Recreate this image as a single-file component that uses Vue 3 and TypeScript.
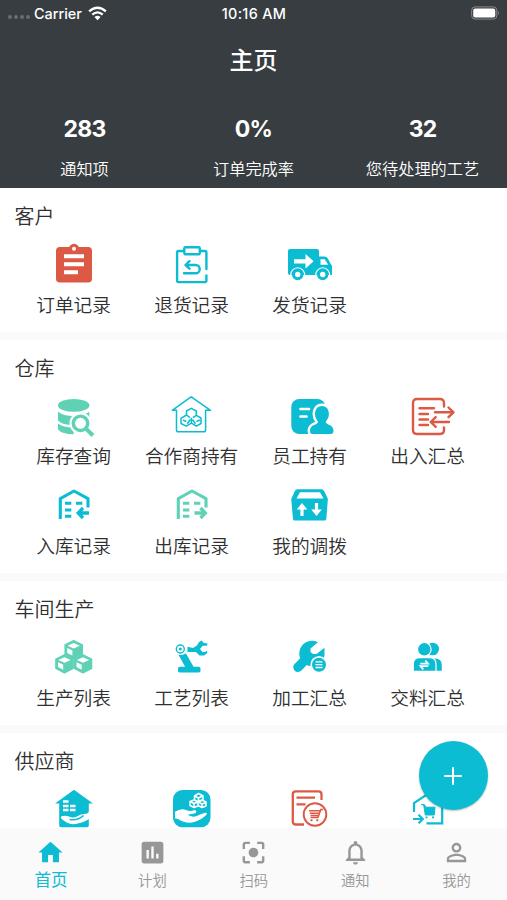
<script setup lang="ts">
interface Entry {
  label: string
  icon: string
  tone: 'cyan' | 'red' | 'green'
}
interface Section {
  title: string
  entries: Entry[]
}

const stats = [
  { value: '283', label: '通知项' },
  { value: '0%', label: '订单完成率' },
  { value: '32', label: '您待处理的工艺' },
]

const sections: Section[] = [
  {
    title: '客户',
    entries: [
      { label: '订单记录', icon: 'order', tone: 'red' },
      { label: '退货记录', icon: 'return', tone: 'cyan' },
      { label: '发货记录', icon: 'truck', tone: 'cyan' },
    ],
  },
  {
    title: '仓库',
    entries: [
      { label: '库存查询', icon: 'stock', tone: 'green' },
      { label: '合作商持有', icon: 'partner', tone: 'cyan' },
      { label: '员工持有', icon: 'staff', tone: 'cyan' },
      { label: '出入汇总', icon: 'flow', tone: 'red' },
      { label: '入库记录', icon: 'inbound', tone: 'cyan' },
      { label: '出库记录', icon: 'outbound', tone: 'green' },
      { label: '我的调拨', icon: 'transfer', tone: 'cyan' },
    ],
  },
  {
    title: '车间生产',
    entries: [
      { label: '生产列表', icon: 'cubes', tone: 'green' },
      { label: '工艺列表', icon: 'robot', tone: 'cyan' },
      { label: '加工汇总', icon: 'wrench', tone: 'cyan' },
      { label: '交料汇总', icon: 'people', tone: 'cyan' },
    ],
  },
  {
    title: '供应商',
    entries: [
      { label: '', icon: 'house-hand', tone: 'cyan' },
      { label: '', icon: 'cube-hand', tone: 'cyan' },
      { label: '', icon: 'doc-cart', tone: 'red' },
      { label: '', icon: 'house-cart', tone: 'cyan' },
    ],
  },
]

const tabs = [
  { label: '首页', icon: 'home', active: true },
  { label: '计划', icon: 'chart', active: false },
  { label: '扫码', icon: 'scan', active: false },
  { label: '通知', icon: 'bell', active: false },
  { label: '我的', icon: 'person', active: false },
]
</script>

<template>
  <div class="screen">
    <svg class="sprite" aria-hidden="true">
      <defs>
        <g id="i-order">
          <circle cx="20" cy="5.2" r="5.4" fill="currentColor" />
          <rect x="2" y="3" width="36" height="35.5" rx="3.8" fill="currentColor" />
          <circle cx="20" cy="4.7" r="2" fill="#fff" />
          <path d="M10 12.3h20M10 20.3h20M10 28.3h14" stroke="#fff" stroke-width="4" fill="none" />
        </g>
        <g id="i-return" fill="none" stroke="currentColor" stroke-width="2.4" stroke-linecap="round" stroke-linejoin="round">
          <path d="M11.500 7H6.500q-1.400 0-1.400 1.400V36.500q0 1.600 1.400 1.600H33q1.400 0 1.400-1.600V31.500M34.400 25V8.400q0-1.400-1.400-1.400H28.200" />
          <rect x="12.300" y="3.300" width="15.500" height="7" rx="1.200" />
          <path d="M17.500 17.200 13.500 21 17.500 24.700M13.500 21H23.600a4.100 4.100 0 0 1 0 8.300H12" />
        </g>
        <g id="i-truck">
          <path d="M0 5H27q2 0 2 2V12.500H34.500q2 0 3 1.500L41 20.500q1 .5 1 2V31H0q-2 0-2-2V7q0-2 2-2Z" fill="currentColor" />
          <path d="M30.500 15.300h4.200l3.500 5.400h-7.700Z" fill="#fff" />
          <path d="M4 15.200H15.500V10L23.600 17.300 15.500 24.600V19.500H4Z" fill="#fff" />
          <g fill="#fff" stroke="currentColor" stroke-width="3"><circle cx="7.700" cy="30.500" r="4.200" /><circle cx="32.700" cy="30.500" r="4.200" /></g>
          <path d="M.8 32a7 7 0 1 1 13.800 0M25.800 32a7 7 0 1 1 13.800 0" stroke="#fff" stroke-width="1.100" fill="none" />
        </g>
        <g id="i-stock">
          <ellipse cx="19.700" cy="9.400" rx="15.700" ry="6.400" fill="currentColor" />
          <path d="M4 15.500q5 4.500 15.700 4.500V29Q8 29 4 24.500ZM4 27.500q5 4 15.700 4V38.300Q8 38.300 4 33.500Z" fill="currentColor" />
          <path d="M19 20.300q10 0 16.300-4.500V24H19Z" fill="currentColor" />
          <circle cx="26.500" cy="27.300" r="11" fill="#fff" />
          <circle cx="26.500" cy="27.300" r="7.200" fill="none" stroke="currentColor" stroke-width="3.400" />
          <path d="M31.500 32.300 39 39.500" stroke="currentColor" stroke-width="4" />
        </g>
        <g id="i-partner" fill="none" stroke="currentColor" stroke-width="1.500" stroke-linejoin="round">
          <path d="M19.300 .9 38.500 14.300H33.600V34q0 1.800-1.800 1.800H6.300q-1.800 0-1.800-1.800V14.300H.3L17.600 1.900q1.700-1.500 3.400 0" />
          <path d="M14.500 19V15L19.300 12.300 24.300 15V19.300L29 22V27.500L24.400 30.200 19.400 27.200 14.300 30.200 9 27.500V22.300L14.500 19l3.500 2.700M24.300 19.300l-3.500 2.400M19.400 21.800v5.200M11 24l3.300 1.500M28 24l-3.500 1.500M18.300 23.500l-3 4.300M20.500 23.500l3 4.300" />
        </g>
        <g id="i-staff">
          <rect x="1.300" y="3" width="34" height="35" rx="8" fill="currentColor" />
          <path d="M10.500 13H19M10.500 20.500h6" stroke="#fff" stroke-width="2.700" stroke-linecap="round" />
          <path d="M32 10c-4.500 0-7 3.600-7 8 0 3.500 1.500 5.600 3 7.500 0 4-8 2.500-8 9 0 3 1.500 3.500 3 3.500H40.500c2.500 0 3-1.600 3-3.500 0-6.500-7.800-5-7.800-9 1.800-1.900 3.200-4 3.200-7.500 0-4.400-2.400-8-6.900-8Z" fill="currentColor" stroke="#fff" stroke-width="5" paint-order="stroke" />
        </g>
        <g id="i-flow" fill="none" stroke="currentColor" stroke-width="2.400" stroke-linecap="round" stroke-linejoin="round">
          <path d="M36 10.500V7q0-4-4-4H9Q5 3 5 7V34q0 4 4 4H32q4 0 4-4V31.500" />
          <path d="M11.500 12.300H26M11.500 18H20M11.500 23.500H20M11.500 29H20M27 16.300H45.500M40.500 11.500l5 4.800-5 4.800M41 26H22.700M27.700 21.200l-5 4.800 5 4.800" />
        </g>
        <g id="i-depot" fill="none" stroke="currentColor" stroke-width="3.100" stroke-linejoin="round">
          <path d="M6.300 34V13.600L20 6 34 13.600V22.500" />
          <path d="M11 18.200h6.300M22 18.200h6.300M11 25h6.300M11 31.200h6.300" />
        </g>
        <g id="i-inbound">
          <use href="#i-depot" />
          <path d="M35 28H24.500M29 23 24.200 28l4.800 5" fill="none" stroke="currentColor" stroke-width="3.300" />
        </g>
        <g id="i-outbound">
          <use href="#i-depot" />
          <path d="M22.500 28H33M28.500 23 33.300 28l-4.800 5" fill="none" stroke="currentColor" stroke-width="3.300" />
        </g>
        <g id="i-transfer">
          <path d="M7.500 4.300H31.500q1.800 0 2.500 1.500L37.500 13q.5 1 .3 2L36.300 34q-.2 1.500-1.700 1.500H4.700Q3.200 35.500 3 34L1.300 15q-.1-1 .3-2L5 5.800Q5.700 4.300 7.500 4.300Z" fill="currentColor" />
          <path d="M10 7.200H30l3.500 6.300H6.500Z" fill="#fff" />
          <path d="M12 18 17.300 24.500H13.600V31H10.400V24.500H6.700ZM26.500 31 21.200 24.500h3.700V18h3.200v6.500h3.700Z" fill="#fff" />
        </g>
        <g id="i-cube">
          <path d="M0-8.600 8.600-4.300V5L0 9.400-8.600 5V-4.300Z" fill="currentColor" stroke="currentColor" stroke-width="1.400" stroke-linejoin="round" />
          <path d="M0-6.300 6.200-3.600 0-.8-6.200-3.600Z" fill="#fff" />
          <path d="M-6.500-1.200-1.300 1.300V6.200L-6.500 3.600Z" fill="#fff" />
        </g>
        <g id="i-cubes">
          <use href="#i-cube" x="19.700" y="12.300" />
          <use href="#i-cube" x="10.500" y="26.500" />
          <use href="#i-cube" x="29" y="26.500" />
        </g>
        <g id="i-robot" fill="currentColor">
          <circle cx="8.300" cy="12" r="4" fill="none" stroke="currentColor" stroke-width="1.400" />
          <circle cx="8.300" cy="12" r="1.500" />
          <path d="M15.500 9.800 21 11 25 8.500 27 5l2.500-1.500L32 6l3.500.5-.5 2.300-4.300 0L28 12l2.500 3H33l2-1.200.3 2.200L32 18.500h-4.500L24 15H15.500Z" />
          <path d="M6.500 17.700q4.500 1 7.300-1.500L22 30.500H13.500Z" />
          <rect x="6" y="29.800" width="22.500" height="5.700" rx="1.700" />
        </g>
        <g id="i-wrench">
          <path d="M8 30.300 18 20" stroke="currentColor" stroke-width="9.500" stroke-linecap="round" />
          <path d="M28 5.300A12.700 12.700 0 1 0 34.500 18.500V10.700L26.500 17 23 17 20.500 15V11.500Z" fill="currentColor" />
          <circle cx="29" cy="27.700" r="8.600" fill="#fff" />
          <circle cx="29" cy="27.700" r="7" fill="currentColor" />
          <path d="M25.500 24.900h7M25.500 27.700h7M25.500 30.500h7" stroke="#fff" stroke-width="1.300" />
        </g>
        <g id="i-people" fill="currentColor">
          <circle cx="24.700" cy="12" r="6.300" />
          <path d="M24 21.500h3q6.800 0 6.800 6.500v5.700H24Z" />
          <circle cx="16.300" cy="12.300" r="6.800" stroke="#fff" stroke-width="1.200" />
          <path d="M11.500 20.700H21.500q6.500 0 6.500 6.500V34.300H5.300V27.200q0-6.500 6.200-6.500Z" stroke="#fff" stroke-width="1.200" />
          <path d="M12.300 26.600h7.700L17.300 23.500M20.300 29.200H12.600l2.700 3.100" fill="none" stroke="#fff" stroke-width="1.800" />
        </g>
        <g id="i-hand">
          <path d="M0 2.500Q6-1.500 11 .8 15 2.500 19.500 .8 22.500 1.500 20.500 4L12.500 5.500Q18 9 24 5.800L30 3.500Q33 3 31 6 24.500 12 17 13.300 9 14 3.500 10L0 9Z" fill="#fff" />
        </g>
        <g id="i-house-hand">
          <path d="M20 .8 39 14.500H34.800V36.500q0 1.800-1.800 1.800H7q-1.800 0-1.800-1.800V14.500H1Z" fill="currentColor" />
          <path d="M9 12.500h5.500M9 17h5.500M16 17h5.500M9 21h5.500M16 21h5.500" stroke="#fff" stroke-width="2.500" />
          <path d="M7 27.500q4-1.500 8 0 4 2 8 0 3-2.500 7-2.500 3 .3 5-2V30q-7 4.500-15 5.200-7 0-13-6Z" fill="#fff" />
          <path d="M15.500 30.500q8 1.500 14-4" fill="none" stroke="currentColor" stroke-width="1.500" />
        </g>
        <g id="i-cube-hand">
          <rect x="1" y="1" width="37.500" height="37.300" rx="9.500" fill="currentColor" />
          <g fill="currentColor" stroke="#fff" stroke-width="1.500" stroke-linejoin="round">
            <path d="M26.500 4.500 31 7v4l-4.500 2-4-2V7ZM22 11l4 2v4l-4 1.500-4-2v-4ZM30 11l4 2v4l-4 1.500-4-2v-4ZM26.500 9v4M22 14.500v4M30 14.500v4M22.500 7l4 2 4-2M18.500 12.500l3.500 2 4-1.500 4 2 4-1.500" />
          </g>
          <use href="#i-hand" x="3" y="20.300" />
        </g>
        <g id="i-doc-cart" fill="none" stroke="currentColor" stroke-width="2.300">
          <path d="M31.500 11V5.300q0-3-3-3H5.800q-3 0-3 3V32.500q0 3 3 3H14M6.500 8.700H25M6.500 15.300h9" />
          <circle cx="25" cy="25.500" r="11.300" stroke-width="1.900" />
          <path d="M33 20.500H30.800L28 28.500H20.500M19 21.800H30M19.800 24.200h9.300M20.500 26.500h7.700" stroke-width="1.500" />
          <path d="M20.500 31.300h2M26.300 31.300h2" stroke-width="2" />
        </g>
        <g id="i-house-cart" fill="none" stroke="currentColor" stroke-width="2.200">
          <path d="M6 23V14.200L20.300 4.500 34.200 14.200V34.300H18.500M5 30H14.500M10.500 25.800 14.800 30l-4.300 4.300" />
          <path d="M13.300 15.500h3l1.500 2.700H27L26.300 26H17.300L15.700 16Z" fill="currentColor" stroke-width="1" />
          <path d="M17.500 28.300h2M24 28.300h2" stroke-width="1.700" />
        </g>

        <g id="i-home" fill="currentColor"><path d="M10 20v-6h4v6h5v-8h3L12 3 2 12h3v8z" /></g>
        <g id="i-chart" fill="currentColor"><path d="M19 3H5c-1.100 0-2 .9-2 2v14c0 1.100.9 2 2 2h14c1.100 0 2-.9 2-2V5c0-1.100-.9-2-2-2zM9 17H7v-7h2v7zm4 0h-2V7h2v10zm4 0h-2v-4h2v4z" /></g>
        <g id="i-scan" fill="currentColor"><path d="M5 15H3v4c0 1.100.9 2 2 2h4v-2H5v-4zM5 5h4V3H5c-1.100 0-2 .9-2 2v4h2V5zm14-2h-4v2h4v4h2V5c0-1.100-.9-2-2-2zm0 16h-4v2h4c1.100 0 2-.9 2-2v-4h-2v4zM12 8c-2.210 0-4 1.790-4 4s1.790 4 4 4 4-1.790 4-4-1.790-4-4-4z" /></g>
        <g id="i-bell" fill="currentColor"><path d="M12 22c1.100 0 2-.9 2-2h-4c0 1.100.9 2 2 2zm6-6v-5c0-3.070-1.630-5.640-4.500-6.320V4c0-.83-.67-1.500-1.500-1.500s-1.500.67-1.500 1.500v.68C7.640 5.360 6 7.920 6 11v5l-2 2v1h16v-1l-2-2zm-2 1H8v-6c0-2.480 1.510-4.500 4-4.500s4 2.020 4 4.500v6z" /></g>
        <g id="i-person" fill="currentColor"><path d="M12 5.900c1.160 0 2.100.94 2.100 2.100s-.94 2.100-2.100 2.100S9.900 9.160 9.900 8s.94-2.100 2.100-2.100m0 9c2.970 0 6.100 1.460 6.100 2.100v1.100H5.900V17c0-.64 3.130-2.100 6.100-2.100M12 4C9.790 4 8 5.790 8 8s1.790 4 4 4 4-1.790 4-4-1.790-4-4-4zm0 9c-2.670 0-8 1.340-8 4v3h16v-3c0-2.660-5.330-4-8-4z" /></g>
      </defs>
    </svg>

    <header class="header">
      <div class="status">
        <div class="carrier">
          <span class="signal"><i v-for="n in 4" :key="n" /></span>
          <span>Carrier</span>
          <svg class="wifi" viewBox="0 0 20 15" fill="#fff">
            <path d="M10 14.500 6.800 11.200Q10 8.500 13.200 11.200Z" />
            <path d="M4.500 8.600Q10 4 15.500 8.600M1.200 5.200Q10-2.300 18.800 5.200" fill="none" stroke="#fff" stroke-width="2.500" />
          </svg>
        </div>
        <span class="time">10:16 AM</span>
        <div class="power">
          <svg class="battery" viewBox="0 0 30 14">
            <rect x=".7" y=".7" width="26" height="12.600" rx="3.500" fill="none" stroke="#8b8e91" />
            <rect x="2.300" y="2.300" width="22.800" height="9.400" rx="2" fill="#fff" />
            <path d="M28 4.800q1.800 2.200 0 4.400Z" fill="#8b8e91" />
          </svg>
        </div>
      </div>
      <h1 class="heading">主页</h1>
      <div class="stats">
        <div v-for="s in stats" :key="s.label" class="stat">
          <strong>{{ s.value }}</strong>
          <span>{{ s.label }}</span>
        </div>
      </div>
    </header>

    <main class="content">
      <section v-for="section in sections" :key="section.title" class="section">
        <h2>{{ section.title }}</h2>
        <div class="grid">
          <div v-for="entry in section.entries" :key="entry.icon" class="entry">
            <svg class="glyph" :class="entry.tone" viewBox="0 0 40 40"><use :href="'#i-' + entry.icon" /></svg>
            <span>{{ entry.label }}</span>
          </div>
        </div>
      </section>
    </main>

    <nav class="tabs">
      <div v-for="tab in tabs" :key="tab.icon" class="tab" :class="{ active: tab.active }">
        <svg viewBox="0 0 24 24"><use :href="'#i-' + tab.icon" /></svg>
        <span>{{ tab.label }}</span>
      </div>
    </nav>

    <button class="fab" aria-label="新增">
      <svg viewBox="0 0 20 20"><path d="M10 1.300v17.400M1.300 10h17.400" stroke="#fff" stroke-width="2" /></svg>
    </button>
  </div>
</template>

<style>
body {
  margin: 0;
  overflow: hidden;
}
</style>

<style scoped>
.screen {
  position: relative;
  display: flex;
  flex-direction: column;
  height: 900px;
  overflow: hidden;
  background: #fafafa;
  color: #303030;
  font-family: Inter, 'Noto Sans CJK SC', sans-serif;
}
.sprite {
  position: absolute;
  width: 0;
  height: 0;
}
.header {
  flex: none;
  height: 188px;
  box-sizing: border-box;
  background: #383d41;
  color: #fff;
}
.status {
  display: grid;
  grid-template-columns: 1fr auto 1fr;
  align-items: center;
  height: 26px;
  padding: 0 7px 0 8px;
  font-size: 14.4px;
  font-weight: 450;
}
.time {
  letter-spacing: 0.35px;
}
.carrier {
  display: flex;
  align-items: center;
}
.signal {
  display: flex;
  gap: 2px;
  margin: 8px 4px 0 0;
}
.signal i {
  width: 4px;
  height: 4px;
  border-radius: 50%;
  background: #686d70;
}
.wifi {
  width: 19px;
  height: 15px;
  margin-left: 6px;
}
.power {
  display: flex;
  justify-content: flex-end;
}
.battery {
  width: 29px;
  height: 14px;
}
.heading {
  margin: 0;
  height: 68px;
  line-height: 69px;
  text-align: center;
  font-size: 24px;
  font-weight: 500;
}
.stats {
  display: grid;
  grid-template-columns: repeat(3, 1fr);
  padding-top: 20px;
}
.stat {
  display: flex;
  flex-direction: column;
  align-items: center;
}
.stat strong {
  height: 30px;
  line-height: 31px;
  font-size: 23px;
  font-weight: 700;
  letter-spacing: -0.8px;
}
.stat span {
  margin-top: 12px;
  line-height: 26px;
  font-size: 16.2px;
  font-weight: 350;
}
.content {
  flex: 1;
  min-height: 0;
  overflow: hidden;
  display: flex;
  flex-direction: column;
  gap: 8.1px;
}
.section {
  flex: none;
  background: #fff;
}
h2 {
  margin: 0;
  height: 54px;
  padding-left: 14.5px;
  line-height: 58.6px;
  font-size: 20px;
  font-weight: 350;
}
.grid {
  display: grid;
  grid-template-columns: repeat(4, 118px);
  grid-auto-rows: 89.7px;
  padding-left: 14.6px;
}
.entry {
  display: flex;
  flex-direction: column;
  align-items: center;
  padding-top: 2px;
}
.glyph {
  flex: none;
  width: 40px;
  height: 40px;
  overflow: visible;
}
.cyan {
  color: #0bbcd3;
}
.red {
  color: #dc5a45;
}
.green {
  color: #5fd2b6;
}
.entry span {
  margin-top: 9.5px;
  line-height: 24px;
  font-size: 18.7px;
  font-weight: 350;
  white-space: nowrap;
}
.tabs {
  flex: none;
  display: grid;
  grid-template-columns: repeat(5, 1fr);
  height: 72px;
  background: #fafafa;
}
.tab {
  display: flex;
  flex-direction: column;
  align-items: center;
  padding: 10px 0 0 0.6px;
  color: #979797;
}
.tab svg {
  width: 29px;
  height: 29px;
}
.tab span {
  margin-top: 4.4px;
  line-height: 20px;
  font-size: 14.3px;
  font-weight: 350;
}
.tab.active {
  color: #0bbcd3;
}
.tab.active span {
  margin-top: 3px;
  font-size: 16.6px;
  font-weight: 400;
}
.fab {
  position: absolute;
  right: 19.5px;
  bottom: 90px;
  display: flex;
  align-items: center;
  justify-content: center;
  width: 69px;
  height: 69px;
  padding: 0;
  border: 0;
  border-radius: 50%;
  background: #0bbcd3;
  box-shadow: 0 1px 2px rgba(0, 0, 0, 0.25);
}
.fab svg {
  width: 20px;
  height: 20px;
}
</style>
